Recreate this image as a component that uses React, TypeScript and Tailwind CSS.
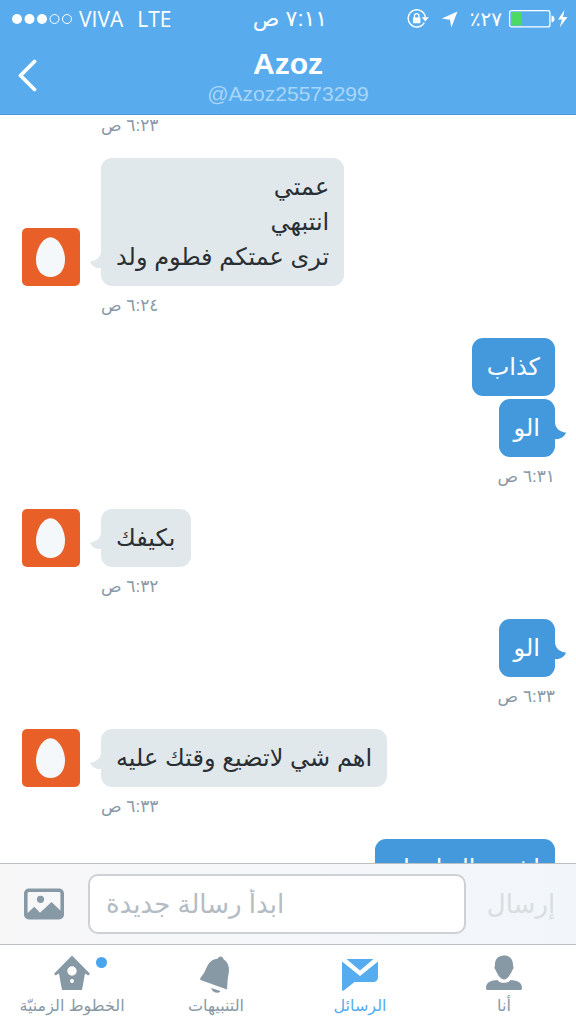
import React from 'react';
import clsx from 'clsx';

type Group = {
  id: number;
  from: 'them' | 'me';
  bubbles: string[][];
  time?: string;
};

const groups: Group[] = [
  { id: 1, from: 'them', bubbles: [['عمتي', 'انتبهي', 'ترى عمتكم فطوم ولد']], time: '٦:٢٤ ص' },
  { id: 2, from: 'me', bubbles: [['كذاب'], ['الو']], time: '٦:٣١ ص' },
  { id: 3, from: 'them', bubbles: [['بكيفك']], time: '٦:٣٢ ص' },
  { id: 4, from: 'me', bubbles: [['الو']], time: '٦:٣٣ ص' },
  { id: 5, from: 'them', bubbles: [['اهم شي لاتضيع وقتك عليه']], time: '٦:٣٣ ص' },
  { id: 6, from: 'me', bubbles: [['اشوى الو اند لو']] }
];

const StatusBar = () => (
  <div className="grid h-[38px] grid-cols-3 items-center pr-2 pl-3 text-[20px] leading-6">
    <div className="flex items-center gap-[6px]">
      <svg width="61" height="12" viewBox="0 0 61 12" aria-hidden="true">
        <circle cx="5" cy="6" r="5" fill="#fff" />
        <circle cx="17.5" cy="6" r="5" fill="#fff" />
        <circle cx="30" cy="6" r="5" fill="#fff" />
        <circle cx="42.5" cy="6" r="4.5" fill="none" stroke="#fff" />
        <circle cx="55" cy="6" r="4.5" fill="none" stroke="#fff" />
      </svg>
      <span className="font-['Open_Sans',sans-serif] text-[21px]">VIVA</span>
      <span className="ml-2 font-['Open_Sans',sans-serif] text-[21px]">LTE</span>
    </div>
    <span dir="rtl" className="text-center text-[22px]">٧:١١ ص</span>
    <div className="flex items-center justify-end">
      <svg className="mr-3" width="22" height="20" viewBox="0 0 22 20" aria-hidden="true">
        <path d="M17.3 13.6A8.6 8.6 0 1 1 18.4 9" fill="none" stroke="#fff" strokeWidth="1.4" />
        <path d="M14.8 8.2h7l-3.5 4.2z" fill="#fff" />
        <rect x="6" y="8.6" width="7.4" height="5.6" rx=".6" fill="#fff" />
        <path d="M7.5 9V6.8a2.2 2.2 0 0 1 4.4 0V9" fill="none" stroke="#fff" strokeWidth="1.3" />
      </svg>
      <svg className="mr-3" width="17" height="17" viewBox="0 0 17 17" fill="#fff" aria-hidden="true">
        <path d="M16.5.5 10.3 16.5 9 8.7.8 7.4z" />
      </svg>
      <span dir="rtl" className="mr-[6px] text-[20px]">٢٧٪</span>
      <svg width="60" height="20" viewBox="0 0 60 20" aria-hidden="true">
        <rect x="1.6" y="1.6" width="40.3" height="16.3" rx="2" fill="none" stroke="#fff" strokeWidth="1.3" />
        <rect x="3" y="3" width="10.5" height="13.5" fill="#4cd964" />
        <path d="M43.5 6.5c4 .4 4 6.6 0 7z" fill="#fff" />
        <path d="M56.5 1 50 10.5h4l-2.3 8L59.5 8h-4.5z" fill="#fff" />
      </svg>
    </div>
  </div>
);

const Header = () => (
  <header className="h-[115px] shrink-0 border-b border-[#4b97d6] bg-[#58acee] text-white">
    <StatusBar />
    <div className="grid grid-cols-[64px_1fr_64px] items-start">
      <button type="button" aria-label="رجوع" className="flex h-[74px] items-center pl-4">
        <svg width="22" height="34" viewBox="0 0 22 34" fill="none" aria-hidden="true">
          <path d="M18.5 3.5 4.5 17.5l14 14" stroke="#fff" strokeWidth="3.8" strokeLinecap="round" strokeLinejoin="round" />
        </svg>
      </button>
      <div className="pt-[10px] text-center">
        <h1 className="text-[30px] leading-8 font-bold">Azoz</h1>
        <p className="text-[21px] leading-7 text-[#a9d6f8]">@Azoz25573299</p>
      </div>
    </div>
  </header>
);

const Avatar = () => (
  <svg className="shrink-0" width="58" height="58" viewBox="0 0 58 58" role="img" aria-label="Azoz">
    <rect width="58" height="58" rx="5" fill="#e95f28" />
    <path d="M28.5 9.3C36.5 9.3 43 21.5 43 31.5 43 42.5 36.8 49 28.5 49S14 42.5 14 31.5C14 21.5 20.5 9.3 28.5 9.3z" fill="#f5f8fa" />
  </svg>
);

const Tail = ({ mine }: { mine: boolean }) =>
  mine ? (
    <svg className="absolute bottom-4 left-full" width="11" height="18" viewBox="0 0 11 18" aria-hidden="true">
      <path d="M0 0c.5 5 4.5 9 11 9.6C9.5 14 5 16.8 0 16z" fill="#4499dc" />
    </svg>
  ) : (
    <svg className="absolute right-full bottom-4" width="11" height="18" viewBox="0 0 11 18" aria-hidden="true">
      <path d="M11 0C10.5 5 6.5 9 0 9.6 1.5 14 6 16.8 11 16z" fill="#e1e8ec" />
    </svg>
  );

const Time = ({ value }: { value: string }) => (
  <time dir="rtl" className="block text-[17px] leading-[22px] text-[#8899a6]">
    {value}
  </time>
);

const MessageGroup = ({ group }: { group: Group }) => {
  const mine = group.from === 'me';
  return (
    <li className={clsx('flex items-end gap-[21px]', mine && 'justify-end')}>
      {!mine && (
        <div className="mb-[31px]">
          <Avatar />
        </div>
      )}
      <div className={clsx('flex flex-col', mine ? 'items-end' : 'items-start')}>
        <div className={clsx('flex flex-col gap-[3px]', mine ? 'items-end' : 'items-start')}>
          {group.bubbles.map((lines, index) => (
            <div
              key={index}
              dir="rtl"
              className={clsx(
                'relative rounded-[11px] px-[15px] pt-[11px] pb-3 text-[24px] leading-[35px]',
                mine ? 'bg-[#4499dc] text-white' : 'bg-[#e1e8ec] text-[#292f33]'
              )}
            >
              {lines.map((line) => (
                <p key={line}>{line}</p>
              ))}
              {index === group.bubbles.length - 1 && group.time && <Tail mine={mine} />}
            </div>
          ))}
        </div>
        {group.time && (
          <div className="mt-[9px]">
            <Time value={group.time} />
          </div>
        )}
      </div>
    </li>
  );
};

const Composer = () => (
  <form
    className="flex shrink-0 items-center border-t border-[#bcbfc3] bg-linear-to-r from-[#f7f7f8] to-[#f2f6fa] py-[10px] pr-5 pl-6"
    onSubmit={(e) => e.preventDefault()}
  >
    <button type="button" aria-label="إضافة صورة" className="mr-6 shrink-0">
      <svg width="40" height="32" viewBox="0 0 40 32" aria-hidden="true">
        <rect x="1.8" y="2.3" width="36.4" height="27.4" rx="3" fill="none" stroke="#8899a6" strokeWidth="3.6" />
        <circle cx="16.5" cy="11.3" r="3.6" fill="#8899a6" />
        <path d="M3 25.5 10.3 18.8l5.7 6L27.5 14 37 23v5H3z" fill="#8899a6" />
      </svg>
    </button>
    <input
      type="text"
      dir="rtl"
      aria-label="رسالة جديدة"
      placeholder="ابدأ رسالة جديدة"
      className="h-[60px] min-w-0 flex-1 rounded-[10px] border-2 border-[#cdd0d4] bg-white px-4 text-left text-[26px] text-[#292f33] outline-none placeholder:text-[#b3bbc4]"
    />
    <button type="submit" dir="rtl" className="ml-5 w-[70px] shrink-0 text-[26px] leading-10 whitespace-nowrap text-[#d9dde0]">
      إرسال
    </button>
  </form>
);

const HomeIcon = () => (
  <svg width="36" height="36" viewBox="0 0 36 36" aria-hidden="true">
    <path
      fillRule="evenodd"
      fill="#8899a6"
      d="M18 .5 35.5 18.2c.8 1-.6 2.6-1.9 1.8L31 18.5 28.3 33.5c-.2 1-.6 1.5-1.5 1.5H9.2c-.9 0-1.3-.5-1.5-1.5L5 18.5 2.4 20C1.1 20.8-.3 19.2.5 18.2zM18 11.3a4.7 4.7 0 1 0 0 9.4 4.7 4.7 0 0 0 0-9.4zM18 24a2 2 0 1 0 0 4 2 2 0 0 0 0-4z"
    />
  </svg>
);

const BellIcon = () => (
  <svg width="36" height="38" viewBox="0 0 36 38" fill="#8899a6" aria-hidden="true">
    <path d="M20 3.5c.5-2.6 4.5-3 5.4.4C30.5 7.5 32 13 30.5 19c-1 5-1 10-1.5 15.5L2.5 25c-.6-1.5-.3-2.2 1-3.5C9.5 15.5 8 5 20 3.5z" />
    <path d="M13 33l9.5 3c-1.5 3-7.5 2.5-9.5-3z" />
  </svg>
);

const MailIcon = () => (
  <svg width="36" height="36" viewBox="0 0 36 36" fill="#55acee" aria-hidden="true">
    <path d="M4.5 4h27L18 15.5z" />
    <path d="M0 6.5 18 21 36 6.5V22c0 3.5-2 5-5 5H12.5L1.8 35.5C.8 36.2 0 35.8 0 34.5z" />
  </svg>
);

const PersonIcon = () => (
  <svg width="36" height="36" viewBox="0 0 36 36" fill="#8899a6" aria-hidden="true">
    <path d="M18 .5c6 0 9.5 4 9 10.5 1 .8.8 2.8-.6 4C24.5 20 21 24.5 18 24.5S11.5 20 9.6 15c-1.4-1.2-1.6-3.2-.6-4C8.500 4.500 12 .5 18 .5z" />
    <path d="M11.5 25c2 3.8 11 3.8 13 0 5.5.5 11.5 1.5 11.5 8 0 1.500-.5 2-2 2H2c-1.500 0-2-.5-2-2 0-6.500 6-7.500 11.500-8z" />
  </svg>
);

const tabs = [
  { label: 'الخطوط الزمنيّة', icon: HomeIcon, active: false, dot: true },
  { label: 'التنبيهات', icon: BellIcon, active: false, dot: false },
  { label: 'الرسائل', icon: MailIcon, active: true, dot: false },
  { label: 'أنا', icon: PersonIcon, active: false, dot: false }
];

const TabBar = () => (
  <nav className="grid h-20 shrink-0 grid-cols-4 border-t border-[#bcbfc3] bg-white">
    {tabs.map(({ label, icon: Icon, active, dot }) => (
      <a
        key={label}
        href="#"
        aria-current={active ? 'page' : undefined}
        className={clsx('flex flex-col items-center pt-[10px]', active ? 'text-[#55acee]' : 'text-[#8899a6]')}
      >
        <span className="relative flex h-[37px] items-start">
          <Icon />
          {dot && <span className="absolute top-[2px] left-full ml-[6px] h-[11px] w-[11px] rounded-full bg-[#4aa5ee]" />}
        </span>
        <span dir="rtl" className="text-[16px] leading-7 whitespace-nowrap">
          {label}
        </span>
      </a>
    ))}
  </nav>
);

export default function App() {
  return (
    <div className="flex h-screen flex-col overflow-hidden bg-white font-['Liberation_Sans','DejaVu_Sans',sans-serif]">
      <Header />
      <main className="min-h-0 flex-1 overflow-hidden pr-[21px] pl-[22px]">
        <div className="mb-[21px] ml-[79px] flex">
          <Time value="٦:٢٣ ص" />
        </div>
        <ol className="flex flex-col gap-[21px]">
          {groups.map((group) => (
            <MessageGroup key={group.id} group={group} />
          ))}
        </ol>
      </main>
      <Composer />
      <TabBar />
    </div>
  );
}
